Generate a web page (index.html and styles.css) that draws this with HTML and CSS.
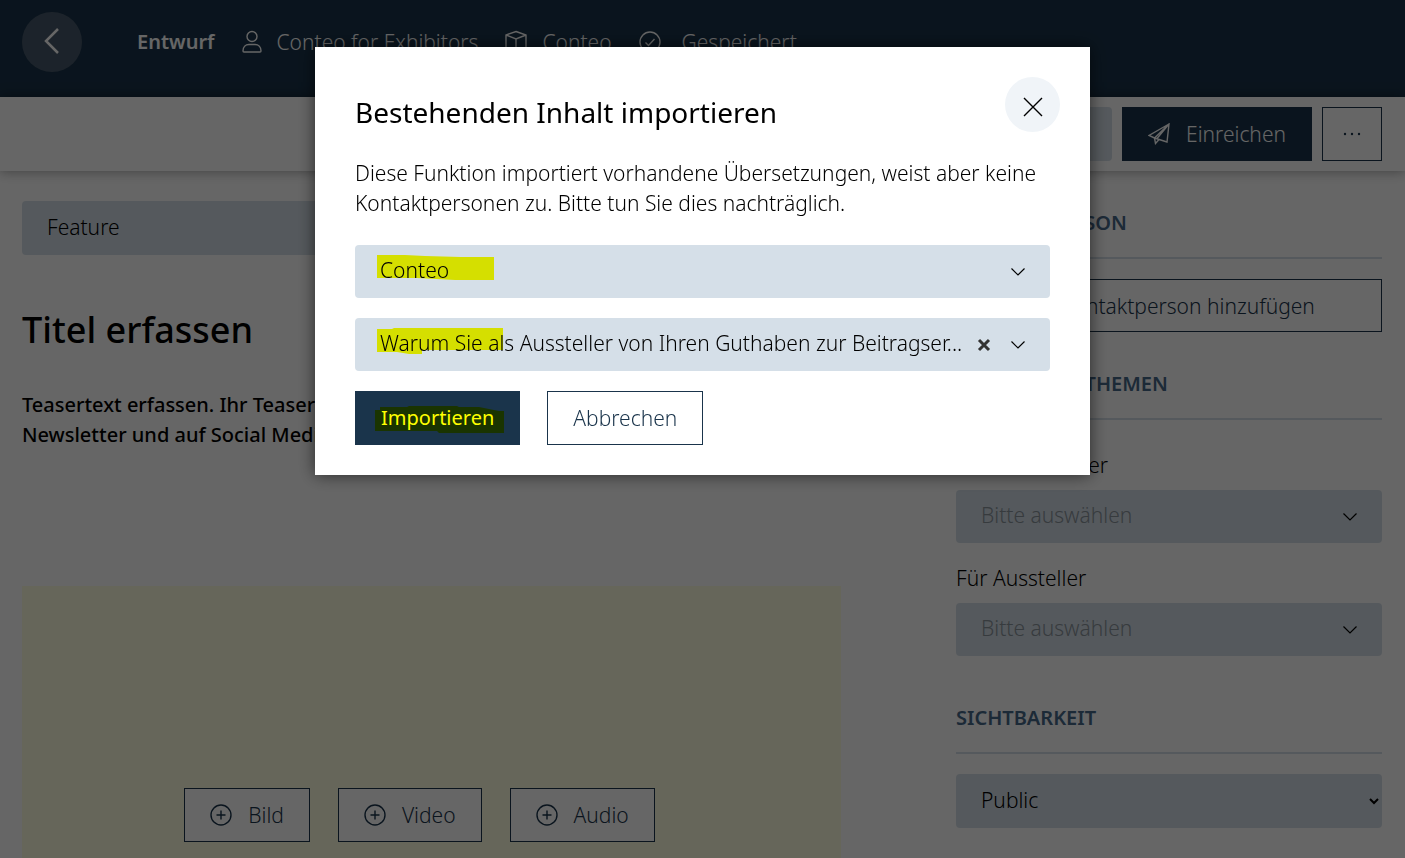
FILE: index.html
```
<!DOCTYPE html>
<html lang="de">
<head>
    <meta charset="UTF-8">
    <meta name="viewport" content="width=device-width, initial-scale=1.0">
    <title>Conteo</title>
    <link rel="stylesheet" href="styles.css">
</head>
<body>
    <header class="header">
        <button class="back" aria-label="Zurück">
            <svg width="16" height="28" viewBox="0 0 16 28"><path d="M14 1 2 13l12 12"/></svg>
        </button>
        <div class="status">
            <strong>Entwurf</strong>
            <span class="status-item">
                <svg width="20" height="24" viewBox="0 0 20 24"><circle cx="10" cy="6.500" r="5"/><path d="M1 21c0-4 2.500-6.500 6-6.500h6c3.500 0 6 2.500 6 6.500 0 .6-.4 1-1 1H2c-.6 0-1-.4-1-1z"/></svg>
                Conteo for Exhibitors
            </span>
            <span class="status-item">
                <svg width="22" height="24" viewBox="0 0 22 24"><path d="M11 1.500 21 5v13l-10 4.500L1 18V5zM1 5l10 4 10-4M11 9v13.500"/></svg>
                Conteo
            </span>
            <span class="status-item status-saved">
                <svg width="22" height="22" viewBox="0 0 22 22"><circle cx="11" cy="11" r="10"/><path d="m6.500 11.500 3 3 6-6.500"/></svg>
                Gespeichert
            </span>
        </div>
    </header>

    <div class="toolbar">
        <select class="native-select language" aria-label="Sprache">
            <option>Deutsch</option>
        </select>
        <button class="btn btn-primary">
            <svg width="22" height="22" viewBox="0 0 22 22"><path d="M21 1 1 12.500l5.500 2.500L19 19zM21 1 6.500 15l1 5.500 3.500-4M21 1 9 15.500"/></svg>
            Einreichen
        </button>
        <button class="btn btn-more" aria-label="Mehr">
            <svg width="18" height="4" viewBox="0 0 18 4"><circle cx="2" cy="2" r="1.200"/><circle cx="9" cy="2" r="1.200"/><circle cx="16" cy="2" r="1.200"/></svg>
        </button>
    </div>

    <div class="content">
        <main>
            <select class="native-select" aria-label="Beitragstyp">
                <option>Feature</option>
            </select>
            <h1>Titel erfassen</h1>
            <p class="teaser">Teasertext erfassen. Ihr Teasertext erscheint auf der Startseite, im<br>Newsletter und auf Social Media.</p>
            <div class="media">
                <button class="btn">
                    <svg width="22" height="22" viewBox="0 0 22 22"><circle cx="11" cy="11" r="10"/><path d="M11 6.500v9M6.500 11h9"/></svg>
                    Bild
                </button>
                <button class="btn">
                    <svg width="22" height="22" viewBox="0 0 22 22"><circle cx="11" cy="11" r="10"/><path d="M11 6.500v9M6.500 11h9"/></svg>
                    Video
                </button>
                <button class="btn">
                    <svg width="22" height="22" viewBox="0 0 22 22"><circle cx="11" cy="11" r="10"/><path d="M11 6.500v9M6.500 11h9"/></svg>
                    Audio
                </button>
            </div>
        </main>

        <aside>
            <section>
                <h2>Kontaktperson</h2>
                <button class="btn btn-wide">
                    <svg width="22" height="22" viewBox="0 0 22 22"><circle cx="11" cy="11" r="10"/><path d="M11 6.500v9M6.500 11h9"/></svg>
                    Kontaktperson hinzufügen
                </button>
            </section>
            <section class="topics">
                <h2>Branchen / Themen</h2>
                <label for="organizers">Für Veranstalter</label>
                <div class="select">
                    <select id="organizers" class="placeholder"><option>Bitte auswählen</option></select>
                    <svg class="chevron" width="14" height="8" viewBox="0 0 14 8"><path d="m.5.5 6.500 6.500L13.500.5"/></svg>
                </div>
                <label for="exhibitors">Für Aussteller</label>
                <div class="select">
                    <select id="exhibitors" class="placeholder"><option>Bitte auswählen</option></select>
                    <svg class="chevron" width="14" height="8" viewBox="0 0 14 8"><path d="m.5.5 6.500 6.500L13.500.5"/></svg>
                </div>
            </section>
            <section>
                <h2 id="visibility">Sichtbarkeit</h2>
                <select class="native-select" aria-labelledby="visibility">
                    <option>Public</option>
                </select>
            </section>
        </aside>
    </div>

    <div class="overlay">
        <div class="modal" role="dialog" aria-modal="true" aria-labelledby="modal-title">
            <div class="modal-head">
                <h2 id="modal-title">Bestehenden Inhalt importieren</h2>
                <button class="close" aria-label="Schliessen">
                    <svg width="20" height="20" viewBox="0 0 20 20"><path d="m1 1 18 18M19 1 1 19"/></svg>
                </button>
            </div>
            <p>Diese Funktion importiert vorhandene Übersetzungen, weist aber keine Kontaktpersonen zu. Bitte tun Sie dies nachträglich.</p>
            <div class="select">
                <select aria-label="Aussteller"><option>Conteo</option></select>
                <svg class="chevron" width="14" height="8" viewBox="0 0 14 8"><path d="m.5.5 6.500 6.500L13.500.5"/></svg>
                <svg class="marker" width="117" height="25" viewBox="0 0 117 25"><path d="M0 0h28l20 1 36 1h33v23H78l-38-2H0z"/></svg>
            </div>
            <div class="select">
                <select aria-label="Beitrag"><option>Warum Sie als Aussteller von Ihren Guthaben zur Beitragser...</option></select>
                <button class="clear" aria-label="Auswahl löschen">
                    <svg width="14" height="14" viewBox="0 0 14 14"><path d="m2 2 10 10M12 2 2 12"/></svg>
                </button>
                <svg class="chevron" width="14" height="8" viewBox="0 0 14 8"><path d="m.5.5 6.500 6.500L13.500.5"/></svg>
                <svg class="marker" width="126" height="26" viewBox="0 0 126 26"><path d="M0 1h15l2-1h109v22H45v4H32l-12-2H0z"/></svg>
            </div>
            <div class="modal-actions">
                <button class="btn btn-primary btn-import">
                    Importieren
                    <svg class="marker" width="129" height="27" viewBox="0 0 129 27"><path d="M0 4h5V1h27l2-1h48l2 1h20l10 2 10 2h5v22H64l-2-2H0z"/></svg>
                </button>
                <button class="btn">Abbrechen</button>
            </div>
        </div>
    </div>
</body>
</html>
```
FILE: styles.css
```
* {
    box-sizing: border-box;
}
body {
    margin: 0;
    height: 100vh;
    overflow: hidden;
    background: #fff;
    color: #000;
    font-family: "Noto Sans", "Open Sans", sans-serif;
    font-size: 21px;
    font-weight: 300;
    line-height: 30px;
}
button, select {
    font: inherit;
    color: inherit;
}
button {
    cursor: pointer;
}
svg {
    flex: none;
    fill: none;
    stroke: currentColor;
    stroke-width: 1.4;
}
h1, h2, p {
    margin: 0;
}

/* header */
.header {
    display: flex;
    align-items: flex-start;
    gap: 55px;
    height: 97px;
    padding: 12px 22px;
    background: #1a344b;
    color: #fff;
}
.back {
    display: flex;
    align-items: center;
    justify-content: center;
    width: 60px;
    height: 60px;
    padding: 0;
    border: none;
    border-radius: 50%;
    background: #48596b;
}
.back svg {
    stroke-width: 2.5;
}
.status {
    display: flex;
    align-items: center;
    gap: 27px;
    height: 60px;
    white-space: nowrap;
}
.status strong {
    font-size: 20px;
    font-weight: 600;
}
.status-item {
    display: flex;
    align-items: center;
    gap: 15px;
}
.status-saved {
    gap: 21px;
}

/* toolbar */
.toolbar {
    position: relative;
    display: flex;
    justify-content: flex-end;
    gap: 10px;
    padding: 10px 23px 10px 22px;
    background: #fff;
    box-shadow: 0 0 12px rgba(0, 0, 0, 0.4);
}
.btn {
    display: flex;
    align-items: center;
    justify-content: center;
    gap: 16px;
    height: 54px;
    padding: 0 25px;
    border: 1px solid #1a344b;
    background: #fff;
    color: #1a344b;
}
.btn-primary {
    background: #1a344b;
    color: #fff;
}
.btn-more {
    width: 60px;
    padding: 0;
}
.btn-more svg {
    fill: currentColor;
    stroke: none;
}
.btn-wide {
    width: 100%;
    height: 53px;
}
.native-select {
    display: block;
    width: 100%;
    height: 54px;
    padding: 0 21px 2px;
    border: none;
    border-radius: 4px;
    background-color: #d5dfe8;
}
.language {
    width: 200px;
    appearance: none;
}

/* content */
.content {
    display: grid;
    grid-template-columns: minmax(0, 1fr) 426px;
    gap: 115px;
    padding: 30px 23px 0 22px;
}
h1 {
    margin-top: 45px;
    font-size: 36px;
    font-weight: 500;
    line-height: 60px;
}
.teaser {
    margin-top: 30px;
    font-size: 20px;
    font-weight: 500;
}
.media {
    display: flex;
    align-items: flex-end;
    justify-content: center;
    gap: 28px;
    height: 460px;
    margin-top: 136px;
    padding: 0 24px 204px 0;
    background: #ffffe0;
}
aside h2 {
    margin-bottom: 20px;
    padding-bottom: 12px;
    border-bottom: 2px solid #d5dfe8;
    color: #48698a;
    font-size: 20px;
    font-weight: 600;
    line-height: 44px;
    text-transform: uppercase;
}
section {
    margin-bottom: 30px;
}
.topics {
    margin-bottom: 40px;
}
.topics h2 {
    margin-bottom: 30px;
}
label {
    display: block;
    margin-bottom: 10px;
}

/* drop-downs */
.select {
    position: relative;
    display: flex;
    align-items: center;
    gap: 10px;
    height: 53px;
    margin-bottom: 20px;
    padding-right: 25px;
    border-radius: 4px;
    background: #d5dfe8;
}
.select select {
    flex: 1;
    min-width: 0;
    height: 100%;
    padding: 0 0 4px 25px;
    border: none;
    background: none;
    appearance: none;
    text-overflow: ellipsis;
}
.select .placeholder {
    color: #8a949c;
}
.chevron {
    stroke-width: 1.2;
}
.clear {
    display: flex;
    margin-right: 10px;
    padding: 0;
    border: none;
    background: none;
    color: #333;
}
.clear svg {
    stroke-width: 3;
}

/* modal */
.overlay {
    position: fixed;
    inset: 0;
    padding-top: 47px;
    background: rgba(0, 0, 0, 0.6);
}
.modal {
    max-width: 775px;
    margin: 0 auto;
    padding: 30px 40px;
    background: #fff;
    box-shadow: 0 0 16px rgba(0, 0, 0, 0.6);
}
.modal-head {
    display: flex;
    justify-content: space-between;
    margin: 0 -10px 26px 0;
}
.modal-head h2 {
    padding-top: 15px;
    font-size: 28px;
    font-weight: 400;
    line-height: 40px;
}
.close {
    display: flex;
    align-items: center;
    justify-content: center;
    width: 55px;
    height: 55px;
    padding: 4px 0 0;
    border: none;
    border-radius: 50%;
    background: #f0f4f8;
    color: #000;
}
.modal p {
    margin-bottom: 27px;
}
.modal-actions {
    display: flex;
    gap: 27px;
}
.btn-import {
    position: relative;
    font-size: 20px;
    font-weight: 400;
}
.marker {
    position: absolute;
    top: 10px;
    left: 22px;
    fill: #ff0;
    stroke: none;
    mix-blend-mode: multiply;
    pointer-events: none;
}
.btn-import .marker {
    top: 14px;
    left: 19px;
}
```
